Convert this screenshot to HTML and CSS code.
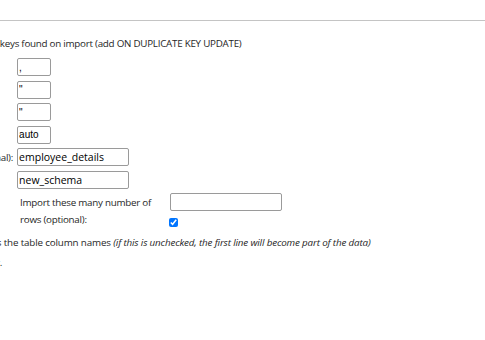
FILE: index.html
```html
<!DOCTYPE html>
<html lang="en">
<head>
    <meta charset="UTF-8">
    <meta name="viewport" content="width=device-width, initial-scale=1.0">
    <title>Import - Format-specific options</title>
    <link rel="stylesheet" href="styles.css">
</head>
<body>
    <div class="page">
        <hr class="rule">

        <div class="line line-dup">
            <input type="checkbox" id="dupUpdate">
            <label for="dupUpdate">Update data when duplicate keys found on import (add ON DUPLICATE KEY UPDATE)</label>
        </div>

        <div class="opts">
            <label for="sep">Columns separated with:</label>
            <input type="text" id="sep" class="small" value=",">
            <label for="enc">Columns enclosed with:</label>
            <input type="text" id="enc" class="small" value="&quot;">
            <label for="esc">Columns escaped with:</label>
            <input type="text" id="esc" class="small" value="&quot;">
            <label for="term">Lines terminated with:</label>
            <input type="text" id="term" class="small" value="auto">
            <label for="tbl">Name of the new table (optional):</label>
            <input type="text" id="tbl" class="wide" value="employee_details">
            <label for="db">Name of the database:</label>
            <input type="text" id="db" class="wide" value="new_schema">
        </div>

        <div class="rows">
            <label for="numRows" class="rows-label">Import these many number of rows (optional):</label>
            <input type="text" id="numRows" class="wide">
            <input type="checkbox" id="rowsCheck" class="rows-check" checked>
        </div>

        <div class="line line-first">
            <input type="checkbox" id="firstLine">
            <label for="firstLine">The first line of the file contains the table column names <em>(if this is unchecked, the first line will become part of the data)</em></label>
        </div>

        <div class="line line-end"><span>Do not abort on INSERT error.</span></div>
    </div>
</body>
</html>
```

FILE: styles.css
```css
body {
    margin: 0;
    overflow: hidden;
    font-family: 'Open Sans', sans-serif;
    font-size: 9.8px;
    letter-spacing: -0.25px;
    color: #262626;
    background: #fff;
}
.page {
    padding-top: 20px;
    width: 485px;
}
.rule {
    margin: 0;
    border: 0;
    border-top: 1px solid #c4c4c4;
}
.line {
    white-space: nowrap;
    line-height: 14px;
    height: 14px;
}
.line input[type="checkbox"] {
    width: 9px;
    height: 9px;
    margin: 0 3px 0 0;
    vertical-align: -1px;
}
.line-dup {
    margin-top: 16px;
    margin-left: -139px;
}
.opts {
    display: grid;
    grid-template-columns: max-content max-content;
    column-gap: 4px;
    row-gap: 4.6px;
    align-items: center;
    margin-top: 7px;
    margin-left: -131px;
    white-space: nowrap;
}
input[type="text"] {
    box-sizing: border-box;
    height: 18px;
    padding: 0 1px;
    border: 1px solid #9a9a9a;
    border-radius: 2px;
    font-family: 'Liberation Sans', Arial, sans-serif;
    font-size: 10px;
    letter-spacing: 0;
    color: #000;
    margin: 0;
}
.opts .wide {
    font-family: 'Open Sans', sans-serif;
    font-size: 10.5px;
}
.small {
    width: 34px;
}
.wide {
    width: 112px;
}
.rows {
    display: grid;
    grid-template-columns: 150px 112px;
    margin: 4px 0 0 20px;
}
.rows-label {
    grid-row: span 2;
    line-height: 17px;
    padding-top: 1px;
}
.rows-check {
    width: 9px;
    height: 9px;
    margin: 6px 0 0 -1px;
}
.line-first {
    margin-top: 8px;
    margin-left: -151px;
    letter-spacing: -0.15px;
}
.line-end {
    margin-top: 6px;
    width: 2px;
    display: flex;
    justify-content: flex-end;
}
```
